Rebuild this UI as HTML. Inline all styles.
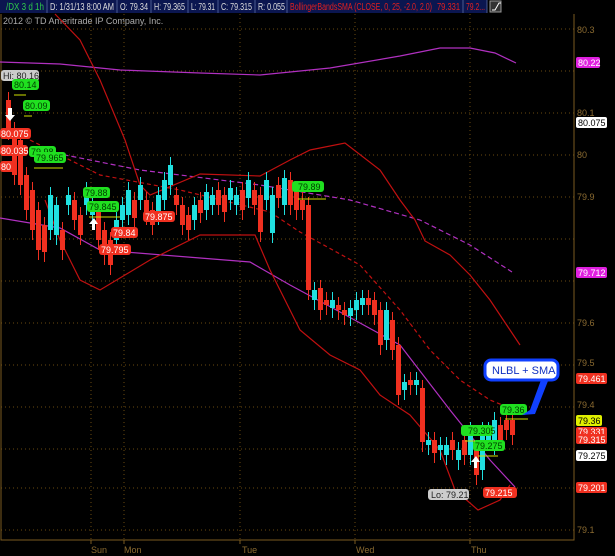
<!DOCTYPE html>
<html><head><meta charset="utf-8"><style>
html,body{margin:0;padding:0;background:#000;width:615px;height:556px;overflow:hidden}
text{font-family:"Liberation Sans",sans-serif}
</style></head><body>
<svg style="position:absolute;left:0;top:0" width="615" height="556">
<rect x="0" y="0" width="487" height="13" fill="#0b1650"/>
<g stroke="#4a5a90"><line x1="47" x2="47" y1="0" y2="13"/><line x1="117" x2="117" y1="0" y2="13"/><line x1="151" x2="151" y1="0" y2="13"/><line x1="188" x2="188" y1="0" y2="13"/><line x1="218" x2="218" y1="0" y2="13"/><line x1="255" x2="255" y1="0" y2="13"/><line x1="287" x2="287" y1="0" y2="13"/><line x1="463" x2="463" y1="0" y2="13"/><line x1="487" x2="487" y1="0" y2="13"/></g>
<g font-size="10" fill="#ddd" lengthAdjust="spacingAndGlyphs">
<text x="6" y="10" fill="#2dc84a" textLength="38" lengthAdjust="spacingAndGlyphs">/DX 3 d 1h</text>
<text x="50" y="10" textLength="64" lengthAdjust="spacingAndGlyphs">D: 1/31/13 8:00 AM</text>
<text x="120" y="10" textLength="28" lengthAdjust="spacingAndGlyphs">O: 79.34</text>
<text x="154" y="10" textLength="31" lengthAdjust="spacingAndGlyphs">H: 79.365</text>
<text x="191" y="10" textLength="24" lengthAdjust="spacingAndGlyphs">L: 79.31</text>
<text x="221" y="10" textLength="31" lengthAdjust="spacingAndGlyphs">C: 79.315</text>
<text x="258" y="10" textLength="27" lengthAdjust="spacingAndGlyphs">R: 0.055</text>
<text x="290" y="10" fill="#e02020" textLength="142" lengthAdjust="spacingAndGlyphs">BollingerBandsSMA (CLOSE, 0, 25, -2.0, 2.0)</text>
<text x="437" y="10" fill="#e02020" textLength="23" lengthAdjust="spacingAndGlyphs">79.331</text>
<text x="466" y="10" fill="#e02020" textLength="19" lengthAdjust="spacingAndGlyphs">79.2...</text>
</g>
<rect x="490" y="1" width="11" height="11" fill="#333" stroke="#999"/><path d="M492 10h3l4-7h2" stroke="#fff" fill="none"/>
<text x="3" y="24" font-size="9" fill="#aaa">2012 © TD Ameritrade IP Company, Inc.</text>
<g stroke="#6a4a10" stroke-dasharray="1,3">
<line x1="1" x2="574" y1="29" y2="29"/><line x1="1" x2="574" y1="71" y2="71"/><line x1="1" x2="574" y1="113" y2="113"/><line x1="1" x2="574" y1="155" y2="155"/><line x1="1" x2="574" y1="197" y2="197"/><line x1="1" x2="574" y1="239" y2="239"/><line x1="1" x2="574" y1="281" y2="281"/><line x1="1" x2="574" y1="323" y2="323"/><line x1="1" x2="574" y1="365" y2="365"/><line x1="1" x2="574" y1="407" y2="407"/><line x1="1" x2="574" y1="449" y2="449"/><line x1="1" x2="574" y1="488" y2="488"/><line x1="1" x2="574" y1="530" y2="530"/>
<line x1="91" x2="91" y1="14" y2="540"/><line x1="124" x2="124" y1="14" y2="540"/><line x1="240" x2="240" y1="14" y2="540"/><line x1="355" x2="355" y1="14" y2="540"/><line x1="470" x2="470" y1="14" y2="540"/>
</g>
<path d="M1 14V540H574V14" stroke="#7a5a20" fill="none"/>
<g stroke="#7a5a20"><line x1="91" x2="91" y1="540" y2="544"/><line x1="124" x2="124" y1="540" y2="544"/><line x1="240" x2="240" y1="540" y2="544"/><line x1="355" x2="355" y1="540" y2="544"/><line x1="470" x2="470" y1="540" y2="544"/></g>
<g font-size="9" fill="#8a6a30"><text x="91" y="553">Sun</text><text x="124" y="553">Mon</text><text x="242" y="553">Tue</text><text x="356" y="553">Wed</text><text x="471" y="553">Thu</text>
<text x="577" y="33">80.3</text><text x="577" y="116">80.1</text><text x="577" y="158">80</text><text x="577" y="200">79.9</text><text x="577" y="326">79.6</text><text x="577" y="366">79.5</text><text x="577" y="408">79.4</text><text x="577" y="533">79.1</text></g>
<g fill="none" stroke-width="1.2">
<path d="M0 62L60 64L120 70L200 73L260 75L330 68L400 56L440 48L470 48L495 53L516 63" stroke="#b030c0"/>
<path d="M40 150L140 170L260 185L350 200L420 220L470 245L512 272" stroke="#b030c0" stroke-dasharray="5,3"/>
<path d="M0 218L60 228L100 250L200 258L250 262L290 285L340 312L400 345L450 410L490 460L515 487" stroke="#b030c0"/>
<path d="M55 14L80 40L100 80L125 140L140 185L150 195L200 174L260 176L290 160L310 150L345 143L380 170L400 200L415 220L425 241L450 255L470 275L490 300L510 330L520 345" stroke="#c01010"/>
<path d="M45 200L60 240L80 280L100 290L150 260L200 235L255 235L270 270L300 330L330 355L360 370L380 395L410 415L440 450L455 490L478 510L500 500L510 485" stroke="#c01010"/>
<path d="M30 140L100 175L180 190L270 212L300 232L360 265L400 310L430 350L460 380L490 400L515 410" stroke="#c01010" stroke-dasharray="4,3"/>
</g>
<g id="c"></g>
<g font-size="9">
<rect x="1" y="70" width="38" height="11" rx="3" fill="#ccc"/><text x="3" y="79" fill="#222">Hi: 80.16</text>
<rect x="12" y="79" width="27" height="11" rx="3" fill="#20e020"/><text x="14" y="88" fill="#004000">80.14</text>
<rect x="23" y="100" width="27" height="11" rx="3" fill="#20e020"/><text x="25" y="109" fill="#004000">80.09</text>
<rect x="0" y="128" width="31" height="11" rx="3" fill="#f03020"/><text x="1" y="137" fill="#fff">80.075</text>
<rect x="0" y="145" width="28" height="11" rx="3" fill="#f03020"/><text x="1" y="154" fill="#fff">80.035</text>
<rect x="29" y="146" width="27" height="11" rx="3" fill="#20e020"/><text x="31" y="155" fill="#004000">79.98</text>
<rect x="34" y="152" width="32" height="11" rx="3" fill="#20e020"/><text x="36" y="161" fill="#004000">79.965</text>
<rect x="0" y="161" width="16" height="11" rx="3" fill="#f03020"/><text x="1" y="170" fill="#fff">80</text>
<rect x="83" y="187" width="27" height="11" rx="3" fill="#20e020"/><text x="85" y="196" fill="#004000">79.88</text>
<rect x="87" y="201" width="32" height="11" rx="3" fill="#20e020"/><text x="89" y="210" fill="#004000">79.845</text>
<rect x="143" y="211" width="32" height="11" rx="3" fill="#f03020"/><text x="145" y="220" fill="#fff">79.875</text>
<rect x="111" y="227" width="27" height="11" rx="3" fill="#f03020"/><text x="113" y="236" fill="#fff">79.84</text>
<rect x="99" y="244" width="32" height="11" rx="3" fill="#f03020"/><text x="101" y="253" fill="#fff">79.795</text>
<rect x="292" y="181" width="32" height="11" rx="3" fill="#20e020"/><text x="298" y="190" fill="#004000">79.89</text>
<rect x="500" y="404" width="27" height="11" rx="3" fill="#20e020"/><text x="502" y="413" fill="#004000">79.36</text>
<rect x="461" y="425" width="32" height="11" rx="3" fill="#20e020"/><text x="468" y="434" fill="#004000">79.305</text>
<rect x="473" y="440" width="32" height="11" rx="3" fill="#20e020"/><text x="475" y="449" fill="#004000">79.275</text>
<rect x="428" y="489" width="41" height="11" rx="3" fill="#ccc"/><text x="431" y="498" fill="#222">Lo: 79.21</text>
<rect x="483" y="487" width="34" height="11" rx="3" fill="#f03020"/><text x="485" y="496" fill="#fff">79.215</text>
<g stroke="#d0e000"><line x1="14" x2="26" y1="95" y2="95"/><line x1="24" x2="32" y1="116" y2="116"/><line x1="34" x2="63" y1="168" y2="168"/><line x1="89" x2="120" y1="217" y2="217"/><line x1="298" x2="326" y1="199" y2="199"/><line x1="478" x2="498" y1="456" y2="456"/><line x1="505" x2="528" y1="419" y2="419"/><line x1="465" x2="475" y1="441" y2="441"/></g>
<path d="M8 108h4v7h3l-5 6-5-6h3z" fill="#fff"/><path d="M92 230h3v-6h3l-4-6-5 6h3z" fill="#fff"/><path d="M474 468h3v-6h3l-4-6-5 6h3z" fill="#fff"/>
<rect x="485" y="360" width="73" height="20" rx="6" fill="#fff" stroke="#1040ff" stroke-width="3"/><text x="492" y="374" font-size="11" fill="#1030c0">NLBL + SMA</text>
<path d="M541 380L530 410L522 415L535 414L548 381z" fill="#1040ff"/>
<rect x="576" y="57" width="24" height="11" rx="2" fill="#e020e0"/><text x="578" y="66" fill="#fff">80.22</text>
<rect x="576" y="117" width="31" height="11" rx="2" fill="#fff"/><text x="578" y="126" fill="#000">80.075</text>
<rect x="576" y="267" width="31" height="11" rx="2" fill="#e020e0"/><text x="578" y="276" fill="#fff">79.712</text>
<rect x="576" y="373" width="31" height="11" rx="2" fill="#f03020"/><text x="578" y="382" fill="#fff">79.461</text>
<rect x="576" y="415" width="26" height="11" rx="2" fill="#e0f000"/><text x="578" y="424" fill="#000">79.36</text>
<rect x="576" y="427" width="31" height="10" rx="2" fill="#f03020"/><text x="578" y="435" fill="#fff">79.331</text>
<rect x="576" y="434" width="31" height="10" rx="2" fill="#f03020"/><text x="578" y="443" fill="#fff">79.315</text>
<rect x="576" y="450" width="31" height="11" rx="2" fill="#fff"/><text x="578" y="459" fill="#000">79.275</text>
<rect x="576" y="482" width="31" height="11" rx="2" fill="#f03020"/><text x="578" y="491" fill="#fff">79.201</text>
</g>
</svg>
<script>
var d=[[100,130],[130,175],[140,185],[175,210],[190,230],[210,250],[225,252],[195,230],[205,235],[230,250],[195,205],[200,220],[215,235],[190,205],[205,215],[210,240],[230,255],[240,265],[220,240],[205,220],[190,215],[200,218],[185,200],[200,215],[210,225],[195,215],[180,200],[165,185],[195,205],[205,225],[215,230],[205,220],[200,213],[192,210],[195,205],[190,205],[195,212],[188,200],[195,205],[190,210],[180,198],[190,205],[195,232],[180,200],[195,233],[185,198],[178,205],[180,205],[190,210],[200,210],[205,290],[290,300],[288,310],[300,305],[300,308],[305,310],[310,315],[308,316],[300,310],[298,305],[298,305],[300,315],[310,345],[310,340],[320,350],[345,395],[382,390],[380,385],[380,385],[388,442],[440,445],[440,453],[445,450],[445,455],[440,450],[450,460],[440,455],[430,455],[450,475],[430,470],[430,440],[420,445],[425,440],[420,430],[420,435]];
var g='',x=6;
var up=[0,0,0,0,0,0,0,1,1,0,1,0,0,1,1,0,0,0,1,1,1,0,1,0,0,1,1,1,0,0,0,1,0,1,1,0,0,1,1,0,1,0,0,1,1,0,1,0,0,0,0,1,0,0,1,0,0,1,1,1,0,0,0,1,0,0,1,0,1,0,1,0,1,1,0,1,0,1,0,1,1,1,0,0,0];
for(var i=0;i<d.length;i++){var a=d[i][0],b=d[i][1],c=up[i]?'#20e0e0':'#f03020';
g+='<line x1="'+(x+2.5)+'" x2="'+(x+2.5)+'" y1="'+(a-8)+'" y2="'+(b+10)+'" stroke="'+c+'"/>';
g+='<rect x="'+x+'" y="'+a+'" width="5" height="'+Math.max(2,b-a)+'" fill="'+c+'"/>';x+=6;}
document.getElementById('c').innerHTML=g;
</script>
</body></html>
